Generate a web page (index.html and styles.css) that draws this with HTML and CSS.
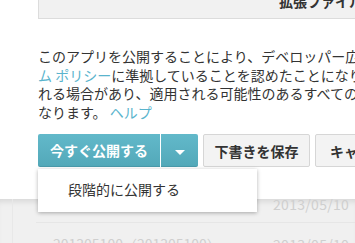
FILE: index.html
```html
<!DOCTYPE html>
<html>
<head>
    <title>公開</title>
    <link rel="stylesheet" href="styles.css">
</head>
<body>
    <div class="dialog">
        <!-- expansion file box, partly scrolled away -->
        <div class="ext-box">拡張ファイル</div>

        <p class="notice">
            このアプリを公開することにより、デベロッパー広告ポリシーとデベロッパー プログラ<br>
            <a href="#">ム ポリシー</a>に準拠していることを認めたことになります。アプリが停止さ<br>
            れる場合があり、適用される可能性のあるすべての法律に従う責任はデベロッパーに<br>
            なります。 <a href="#">ヘルプ</a>
        </p>

        <!-- action buttons -->
        <div class="actions">
            <button class="btn-primary">今すぐ公開する</button>
            <button class="btn-caret"><span class="caret"></span></button>
            <button class="btn-default">下書きを保存</button>
            <button class="btn-default">キャンセル</button>
        </div>

        <div class="menu">
            <div class="menu-item">段階的に公開する</div>
        </div>
    </div>

    <!-- list behind the dialog -->
    <div class="backdrop">
        <div class="list">
            <div class="row first">
                <span class="name"></span>
                <span class="date">2013/05/10</span>
            </div>
            <div class="row">
                <span class="name">201305100（201305100）</span>
                <span class="date">2013/05/10</span>
            </div>
        </div>
    </div>
</body>
</html>
```

FILE: styles.css
```css
body {
    margin: 0;
    width: 355px;
    height: 243px;
    overflow: hidden;
    font-family: "Noto Sans CJK JP", "Liberation Sans", sans-serif;
    color: #333;
    background: #fff;
}

/* white dialog area */
.dialog {
    display: flow-root;
    position: relative;
    z-index: 1;
    width: 700px;
    height: 199px;
    padding-left: 38px;
    background: #fff;
}

.ext-box {
    margin-top: -13px;
    height: 31px;
    padding-left: 240px;
    line-height: 28px;
    font-size: 14px;
    font-weight: bold;
    background: #f1f1f1;
    border-left: 1px solid #dcdcdc;
    border-bottom: 1px solid #dcdcdc;
}

.notice {
    margin: 28px 0 0;
    font-size: 14px;
    line-height: 18.5px;
    white-space: nowrap;
    color: #333;
}

.notice a {
    color: #5ab4cd;
    text-decoration: none;
}

/* buttons */
.actions {
    display: flex;
    margin-top: 13px;
    height: 33px;
}

.actions button {
    height: 33px;
    font-family: inherit;
    font-size: 14px;
    font-weight: bold;
    padding: 0;
    cursor: pointer;
}

.btn-primary {
    width: 122px;
    color: #fff;
    border: none;
    border-radius: 2px 0 0 2px;
    background: linear-gradient(#62b9ca, #53a9b9);
    border-bottom: 1px solid #4a9aaa;
}

.btn-caret {
    width: 37px;
    margin-left: 1px;
    border: none;
    border-radius: 0 2px 2px 0;
    background: linear-gradient(#62b9ca, #53a9b9);
    border-bottom: 1px solid #4a9aaa;
}

.caret {
    display: inline-block;
    border-left: 5px solid transparent;
    border-right: 5px solid transparent;
    border-top: 5px solid #fff;
    vertical-align: middle;
}

.btn-default {
    width: 107px;
    margin-left: 5px;
    color: #333;
    background: #f3f3f3;
    border: 1px solid #d6d6d6;
    border-radius: 2px;
}

.btn-default + .btn-default {
    width: 100px;
}

/* dropdown under the publish button */
.menu {
    position: absolute;
    left: 38px;
    top: 169px;
    width: 219px;
    height: 43px;
    background: #fff;
    box-shadow: 0 1px 4px rgba(0, 0, 0, 0.3);
    z-index: 2;
}

.menu-item {
    padding-left: 30px;
    line-height: 40px;
    font-size: 14px;
    color: #333;
}

/* greyed list behind */
.backdrop {
    height: 44px;
    background: #f0f0f0;
    box-shadow: inset 0 6px 6px -4px rgba(0, 0, 0, 0.12);
    padding-left: 12px;
}

.list {
    height: 100%;
    border-left: 1px solid #e8e8e8;
    padding-left: 23px;
}

.row {
    display: flex;
    border-bottom: 1px solid #e6e6e6;
    font-size: 14px;
    color: #cfcfcf;
    white-space: nowrap;
}

.row.first {
    height: 23px;
    line-height: 10px;
}

.row:last-child {
    border-bottom: none;
    line-height: 43px;
}

.name {
    flex-shrink: 0;
    width: 220px;
    padding-left: 17px;
}

.date {
    letter-spacing: 0.3px;
}
```
